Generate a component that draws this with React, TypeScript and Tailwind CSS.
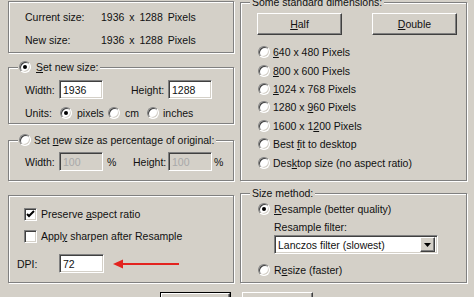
import React from "react";

const etched = "border border-[#808080] shadow-[inset_1px_1px_0_#fff,1px_1px_0_#fff]";
const raised = "bg-[#d4d0c8] border border-t-white border-l-white border-r-[#404040] border-b-[#404040] shadow-[inset_-1px_-1px_0_#808080]";
const sunken = "border border-t-[#808080] border-l-[#808080] border-r-white border-b-white shadow-[inset_1px_1px_0_#404040,inset_-1px_-1px_0_#d4d0c8]";

function Radio({ checked = false }: { checked?: boolean }) {
  return (
    <span className="relative inline-flex shrink-0 w-[12px] h-[12px] rounded-full bg-white border border-t-[#808080] border-l-[#808080] border-r-white border-b-white shadow-[inset_1px_1px_0_#404040,inset_-1px_-1px_0_#d4d0c8] items-center justify-center">
      {checked && <span className="w-[4px] h-[4px] rounded-full bg-black" />}
    </span>
  );
}

function Check({ checked = false }: { checked?: boolean }) {
  return (
    <span className={`inline-flex shrink-0 w-[13px] h-[13px] bg-white items-center justify-center ${sunken}`}>
      {checked && (
        <svg width="9" height="9" viewBox="0 0 9 9">
          <path d="M1 4 L3 6 L8 1" fill="none" stroke="#000" strokeWidth="2" />
        </svg>
      )}
    </span>
  );
}

function Field({ value, disabled = false, w = "w-[44px]", h = "h-[19px]" }: { value: string; disabled?: boolean; w?: string; h?: string }) {
  return (
    <div className={`${w} ${h} ${sunken} ${disabled ? "bg-[#d4d0c8] text-[#a8a8a8]" : "bg-white text-[#111]"} flex items-center pl-[3px]`}>
      {value}
    </div>
  );
}

function Group({ label, className, children }: { label?: React.ReactNode; className: string; children: React.ReactNode }) {
  return (
    <div className={`relative ${etched} ${className}`}>
      {label && (
        <div className="absolute left-[9px] top-[-8px] bg-[#d4d0c8] px-[2px] flex items-center h-[14px] leading-[14px]">
          {label}
        </div>
      )}
      {children}
    </div>
  );
}

const U = ({ children }: { children: React.ReactNode }) => <span className="underline underline-offset-[1px]">{children}</span>;

export default function App() {
  const dims: React.ReactNode[] = [
    <><U>6</U>40 x 480 Pixels</>,
    <><U>8</U>00 x 600 Pixels</>,
    <><U>1</U>024 x 768 Pixels</>,
    <>1280 x <U>9</U>60 Pixels</>,
    <>1600 x 1<U>2</U>00 Pixels</>,
    <>Best <U>f</U>it to desktop</>,
    <>Des<U>k</U>top size (no aspect ratio)</>,
  ];

  return (
    <div className="w-[474px] h-[297px] overflow-hidden bg-[#d4d0c8] text-[#111] text-[10.5px] leading-[14px] font-['Liberation_Sans',Arial,sans-serif] pl-[8px] pt-[1px]">
      <div className="flex gap-[6px]">
        {/* left column */}
        <div className="w-[226px] flex flex-col">
          <Group className="h-[52px] pt-[8px] pl-[16px] flex flex-col gap-[9px]">
            <div className="flex"><span className="w-[76px]">Current size:</span><span className="[word-spacing:2px]">1936 x 1288 Pixels</span></div>
            <div className="flex"><span className="w-[76px]">New size:</span><span className="[word-spacing:2px]">1936 x 1288 Pixels</span></div>
          </Group>

          <Group
            className="mt-[14px] h-[57px] pt-[12px] pl-[16px] flex flex-col gap-[7px]"
            label={<span className="flex items-center gap-[5px] -ml-[1px]"><Radio checked /><span><U>S</U>et new size:</span></span>}
          >
            <div className="flex items-center">
              <span className="w-[34px]">Width:</span>
              <Field value="1936" />
              <span className="ml-[28px] w-[37px]">Height:</span>
              <Field value="1288" />
            </div>
            <div className="flex items-center">
              <span className="w-[35px]">Units:</span>
              <span className="w-[48px] flex items-center gap-[5px]"><Radio checked />pixels</span>
              <span className="w-[39px] flex items-center gap-[5px]"><Radio />cm</span>
              <span className="flex items-center gap-[4px]"><Radio />inches</span>
            </div>
          </Group>

          <Group
            className="mt-[16px] h-[41px] pt-[11px] pl-[16px]"
            label={<span className="flex items-center gap-[3px] -ml-[1px]"><Radio /><span>Set <U>n</U>ew size as percentage of original:</span></span>}
          >
            <div className="flex items-center">
              <span className="w-[34px]">Width:</span>
              <Field value="100" disabled />
              <span className="ml-[4px] w-[26px]">%</span>
              <span className="w-[35px]">Height:</span>
              <Field value="100" disabled />
              <span className="ml-[2px]">%</span>
            </div>
          </Group>

          <Group className="mt-[14px] h-[88px] pt-[11px] flex flex-col">
            <div className="flex items-center gap-[4px] pl-[15px]"><Check checked /><span>Preserve <U>a</U>spect ratio</span></div>
            <div className="flex items-center gap-[4px] pl-[15px] mt-[8px]"><Check /><span>Appl<U>y</U> sharpen after Resample</span></div>
            <div className="flex items-center pl-[8px] mt-[11px]">
              <span className="w-[42px]">DPI:</span>
              <Field value="72" w="w-[45px]" />
              <svg className="ml-[9px]" width="67" height="12" viewBox="0 0 67 12">
                <line x1="8" y1="6" x2="66" y2="6" stroke="#e3231f" strokeWidth="2" />
                <path d="M0 6 L10 1.5 L10 10.5 Z" fill="#e3231f" />
              </svg>
            </div>
          </Group>
        </div>

        {/* right column */}
        <div className="w-[227px] flex flex-col pt-[1px]">
          <Group className="h-[179px] pt-[10px]" label={<span>Some standard dimensions:</span>}>
            <div className="flex pl-[16px] gap-[30px]">
              <div className={`w-[85px] h-[22px] ${raised} flex items-center justify-center`}><span><U>H</U>alf</span></div>
              <div className={`w-[85px] h-[22px] ${raised} flex items-center justify-center`}><span><U>D</U>ouble</span></div>
            </div>
            <div className="mt-[8px] flex flex-col pl-[17px]">
              {dims.map((d, i) => (
                <div key={i} className="h-[18.4px] flex items-center gap-[3px]"><Radio /><span>{d}</span></div>
              ))}
            </div>
          </Group>

          <Group className="mt-[12px] h-[90px] pt-[8px] pl-[17px]" label={<span>Size method:</span>}>
            <div className="flex items-center gap-[4px]"><Radio checked /><span><U>R</U>esample (better quality)</span></div>
            <div className="pl-[16px] mt-[4px]">Resample filter:</div>
            <div className={`ml-[16px] mt-[1px] w-[164px] h-[19px] bg-white ${sunken} flex items-center justify-between pl-[3px] pr-[2px]`}>
              <span>Lanczos filter (slowest)</span>
              <span className={`w-[15px] h-[15px] ${raised} flex items-center justify-center`}>
                <svg width="7" height="4" viewBox="0 0 7 4"><path d="M0 0 L7 0 L3.5 4 Z" fill="#000" /></svg>
              </span>
            </div>
            <div className="flex items-center gap-[4px] mt-[9px]"><Radio /><span>R<U>e</U>size (faster)</span></div>
          </Group>
        </div>
      </div>

      {/* dialog buttons (only their top edge is in view) */}
      <div className="flex gap-[11px] pl-[152px] mt-[9px]">
        <div className="w-[71px] h-[23px] border border-black">
          <div className={`w-full h-full ${raised}`} />
        </div>
        <div className={`w-[71px] h-[23px] ${raised}`} />
      </div>
    </div>
  );
}
